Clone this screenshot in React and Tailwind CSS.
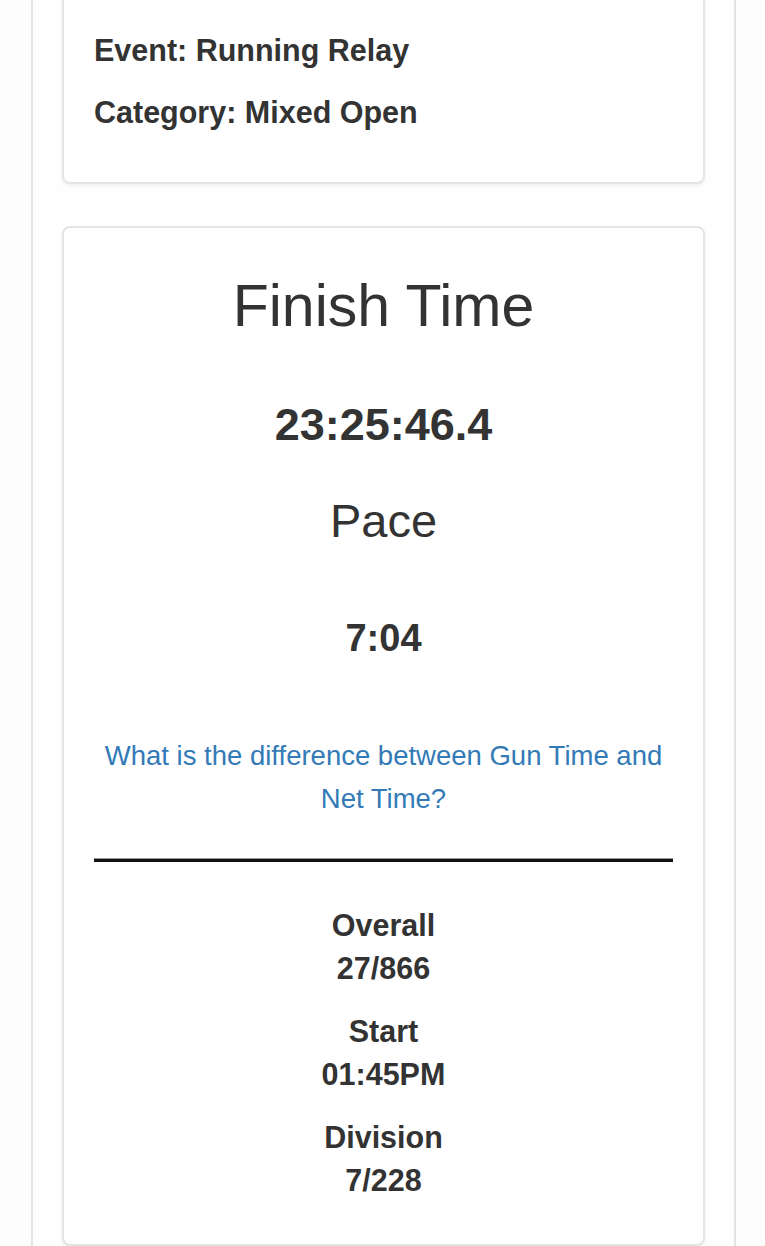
import React from "react";

const stats = [
  { label: "Overall", value: "27/866" },
  { label: "Start", value: "01:45PM" },
  { label: "Division", value: "7/228" },
];

const Card = ({ className = "", children }) => (
  <div
    className={`bg-white border-2 border-[#e4e4e4] rounded-[8px] shadow-[0_2px_3px_rgba(0,0,0,0.06)] ${className}`}
  >
    {children}
  </div>
);

const App = () => {
  return (
    <div
      className="h-[1246px] overflow-hidden bg-[#fdfdfd] text-[#333]"
      style={{ fontFamily: '"Liberation Sans", Arial, Helvetica, sans-serif' }}
    >
      <div className="ml-[31px] w-[705px] h-full flex flex-col border-x-2 border-[#e3e3e3] bg-[#fefefe] px-[29px]">
        {/* event info */}
        <Card className="-mt-[20px] pt-[47px] pb-[48px] px-[30px]">
          <p className="text-[30.5px] font-bold leading-[43px]">Event: Running Relay</p>
          <p className="text-[30.5px] font-bold leading-[43px] mt-[19px]">Category: Mixed Open</p>
        </Card>

        {/* results */}
        <Card className="mt-[42px] px-[30px] pb-[42px] text-center">
          <h1 className="mt-[47px] text-[59px] leading-[63px] font-normal">Finish Time</h1>
          <div className="mt-[63px] text-[45px] leading-[48px] font-bold">23:25:46.4</div>
          <h2 className="mt-[47px] text-[47px] leading-[50px] font-normal">Pace</h2>
          <div className="mt-[71px] text-[38px] leading-[42px] font-bold">7:04</div>

          <a href="#" className="block mt-[75px] text-[27.5px] leading-[43px] text-[#337ab7]">
            What is the difference between Gun Time and Net Time?
          </a>

          <div className="mt-[38px] h-[4px] bg-[#111] border-t border-[#999]" />

          <div className="mt-[42px] flex flex-col gap-[20px]">
            {stats.map((s) => (
              <div key={s.label} className="text-[30.5px] font-bold leading-[43px]">
                <div>{s.label}</div>
                <div>{s.value}</div>
              </div>
            ))}
          </div>
        </Card>
      </div>
    </div>
  );
};

export default App;
